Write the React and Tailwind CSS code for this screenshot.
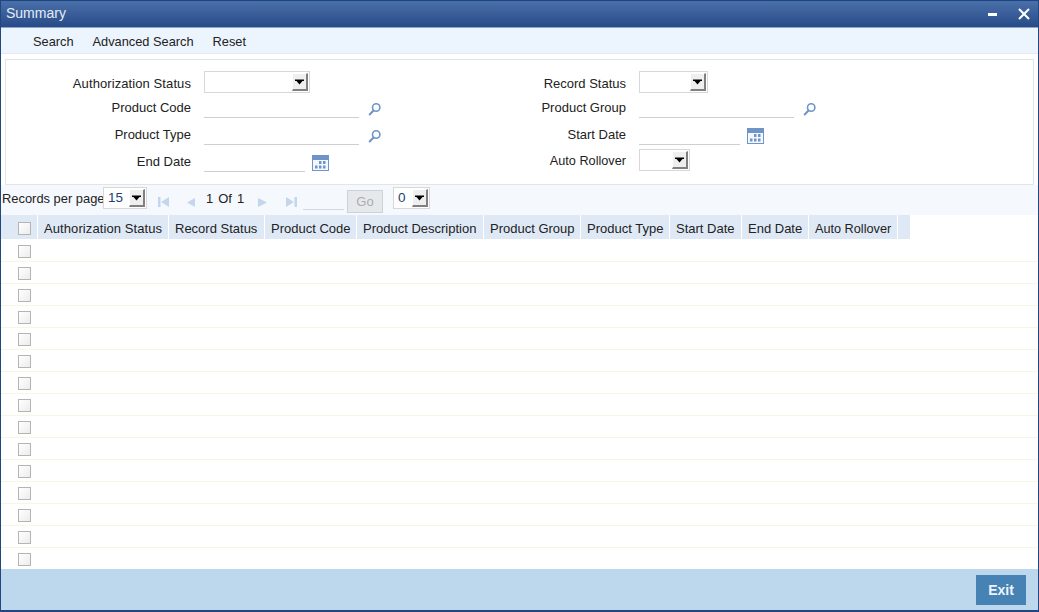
import React from 'react';

const Arrow = () => (
  <svg width="9" height="6" viewBox="0 0 9 6" className="block">
    <path d="M0 0.500H9V2H7.500L4.500 5.500L1.500 2H0Z" fill="#000" />
  </svg>
);

const Select = ({ w, value, className = '' }) => (
  <div className={`h-[22px] ${w} flex items-center justify-between border border-[#d8d8d8] bg-white pl-[4px] pr-[1px] ${className}`}>
    <span className="text-[13.5px] text-[#1d3f72] leading-none">{value}</span>
    <span className="flex h-[18px] w-[16px] items-center justify-center border-t border-l border-t-white border-l-white border-b-2 border-r-2 border-b-[#808080] border-r-[#808080] bg-[#efefef]">
      <Arrow />
    </span>
  </div>
);

const SearchIcon = () => (
  <svg width="14" height="14" viewBox="0 0 14 14" className="block">
    <circle cx="8.200" cy="5.500" r="3.700" fill="none" stroke="#6f94c8" strokeWidth="1.600" />
    <path d="M5.500 8.500L1.700 12.500" stroke="#6f94c8" strokeWidth="2" strokeLinecap="round" />
  </svg>
);

const CalendarIcon = () => (
  <svg width="17" height="16" viewBox="0 0 17 16" className="block">
    <rect width="17" height="16" fill="#6f94c8" />
    <rect x="1" y="5" width="15" height="10" fill="#f4f7fb" />
    <g fill="#6f94c8">
      <rect x="7" y="6" width="2.500" height="3" />
      <rect x="11" y="6" width="2.500" height="3" />
      <rect x="3" y="10.500" width="2.500" height="3" />
      <rect x="7" y="10.500" width="2.500" height="3" />
      <rect x="11" y="10.500" width="2.500" height="3" />
    </g>
  </svg>
);

const Row = ({ label, h, pt, children, align = 'items-center' }) => (
  <div className={`flex ${h} ${align} gap-[13px]`}>
    <span className={`w-[185px] shrink-0 text-right ${pt}`}>{label}</span>
    {children}
  </div>
);

const LineField = ({ w, icon, gap, mb }) => (
  <div className="flex items-end self-stretch">
    <div className={`${w} h-full border-b border-[#cfcfcf]`} />
    {icon && <span className={`${gap} ${mb} self-end`}>{icon}</span>}
  </div>
);

const Check = () => (
  <span className="block h-[13px] w-[13px] border border-[#b4b4b4] bg-gradient-to-br from-white to-[#ececec]" />
);

const NavIcon = ({ d, className }) => (
  <svg width="12" height="12" viewBox="0 0 12 12" className={className}>
    <path d={d} fill="#c3d6ec" />
  </svg>
);

const columns = [
  ['Authorization Status', 'w-[131px] tracking-[0.09px]'],
  ['Record Status', 'w-[96px]'],
  ['Product Code', 'w-[92px]'],
  ['Product Description', 'w-[127px]'],
  ['Product Group', 'w-[97px]'],
  ['Product Type', 'w-[89px]'],
  ['Start Date', 'w-[72px]'],
  ['End Date', 'w-[67px]'],
  ['Auto Rollover', 'w-[89px] text-[12.7px]'],
  ['', 'w-[13px]'],
];

const rows = Array.from({ length: 15 }, (_, i) => i);

export default function App() {
  return (
    <div className="flex h-[612px] w-[1039px] flex-col overflow-hidden border-x border-b-2 border-x-[#22467f] border-b-[#22467f] bg-white font-['Liberation_Sans',Arial,sans-serif] text-[13px] text-[#222]">
      <div className="flex h-[28px] shrink-0 items-center justify-between border-t border-b border-t-[#1f4580] border-b-[#8aa6c8] bg-gradient-to-b from-[#4a70aa] to-[#284b87] pl-[5px] pr-[8px]">
        <span className="text-[14px] text-[#e4ecf6] mb-[2px]">Summary</span>
        <div className="flex items-center gap-[21px]">
          <span className="block h-[3px] w-[9px] bg-white mt-[1px]" />
          <svg width="12" height="12" viewBox="0 0 12 12" className="block">
            <path d="M1 1L11 11M11 1L1 11" stroke="#fff" strokeWidth="2" />
          </svg>
        </div>
      </div>

      <div className="flex h-[26px] shrink-0 items-center gap-[19px] border-b border-[#e3e9ee] bg-[#ecf4fd] pl-[32px] pt-[3px] text-[12.8px]">
        <span>Search</span>
        <span>Advanced Search</span>
        <span>Reset</span>
      </div>

      <div className="mx-[4px] mt-[5px] h-[126px] shrink-0 border border-[#e0e6e8] bg-white pt-[11px]">
        <div className="grid grid-cols-[435px_1fr]">
          <div className="flex flex-col">
            <Row label="Authorization Status" h="h-[22px]" pt="pt-[3px] tracking-[0.09px]"><Select w="w-[106px]" /></Row>
            <Row label="Product Code" h="h-[25px]" pt="pt-[4px]"><LineField w="w-[155px]" icon={<SearchIcon />} gap="ml-[9px]" mb="mb-[2px]" /></Row>
            <Row label="Product Type" h="h-[27px]" pt="pt-[7px]"><LineField w="w-[155px]" icon={<SearchIcon />} gap="ml-[9px]" mb="mb-[2px]" /></Row>
            <Row label="End Date" h="h-[27px]" pt="pt-[7px]"><LineField w="w-[101px]" icon={<CalendarIcon />} gap="ml-[7px]" mb="mb-[1px]" /></Row>
          </div>
          <div className="flex flex-col">
            <Row label="Record Status" h="h-[22px]" pt="pt-[3px]"><Select w="w-[69px]" /></Row>
            <Row label="Product Group" h="h-[25px]" pt="pt-[4px]"><LineField w="w-[155px]" icon={<SearchIcon />} gap="ml-[9px]" mb="mb-[2px]" /></Row>
            <Row label="Start Date" h="h-[27px]" pt="pt-[7px]"><LineField w="w-[101px]" icon={<CalendarIcon />} gap="ml-[7px]" mb="mb-[1px]" /></Row>
            <Row label="Auto Rollover" h="h-[27px]" align="items-end" pt="pb-[1px] text-[12.7px]"><Select w="w-[51px]" className="mb-[1px]" /></Row>
          </div>
        </div>
      </div>

      <div className="flex h-[30px] shrink-0 items-center bg-[#f5f9fe] pl-[1px]">
        <span className="w-[101px] shrink-0 whitespace-nowrap mb-[3px] text-[12.9px]">Records per page</span>
        <Select w="w-[44px]" value="15" className="mb-[4px]" />
        <NavIcon className="ml-[11px] mt-[4px]" d="M0 1H2.500V11H0ZM11 1V11L3 6Z" />
        <NavIcon className="ml-[15px] mt-[4px]" d="M10 2V11L2 6.500Z" />
        <span className="ml-[9px] flex w-[50px] shrink-0 gap-[5px] mb-[2px]"><span>1</span><span>Of</span><span>1</span></span>
        <NavIcon className="ml-[1px] mt-[4px]" d="M1 2V11L10 6.500Z" />
        <NavIcon className="ml-[17px] mt-[4px]" d="M0 1V11L8 6ZM8.500 1H11V11H8.500Z" />
        <span className="ml-[5px] mt-[19px] h-px w-[41px] bg-[#cfd8e4]" />
        <span className="ml-[3px] mt-[3px] flex h-[23px] w-[36px] items-center justify-center border border-[#cdd2d6] bg-[#e6e9ec] text-[#a9adb2]">Go</span>
        <Select w="w-[37px]" value="0" className="ml-[10px] mb-[4px]" />
      </div>

      <div className="flex h-[24px] shrink-0 bg-white">
        <div className="flex w-[37px] shrink-0 items-center justify-center border-r border-white bg-[#dfe9f6] pl-[10px] pt-[2px]">
          <Check />
        </div>
        {columns.map(([name, w], i) => (
          <div key={i} className={`${w} shrink-0 border-r border-white bg-[#dfe9f6] pl-[6px] leading-[28px] whitespace-nowrap`}>{name}</div>
        ))}
      </div>

      <div className="flex h-[330px] shrink-0 flex-col overflow-hidden pt-[1px]">
        {rows.map((i) => (
          <div key={i} className="flex h-[22px] shrink-0 items-center border-b border-[#f9f4e6] pl-[17px] pt-[1px]">
            <Check />
          </div>
        ))}
      </div>

      <div className="flex min-h-0 flex-1 items-start justify-end bg-[#bdd8ed] pr-[12px] pt-[6px]">
        <button className="h-[30px] w-[50px] bg-[#4682b4] text-[14px] font-bold text-[#eef4f9]">Exit</button>
      </div>
    </div>
  );
}
